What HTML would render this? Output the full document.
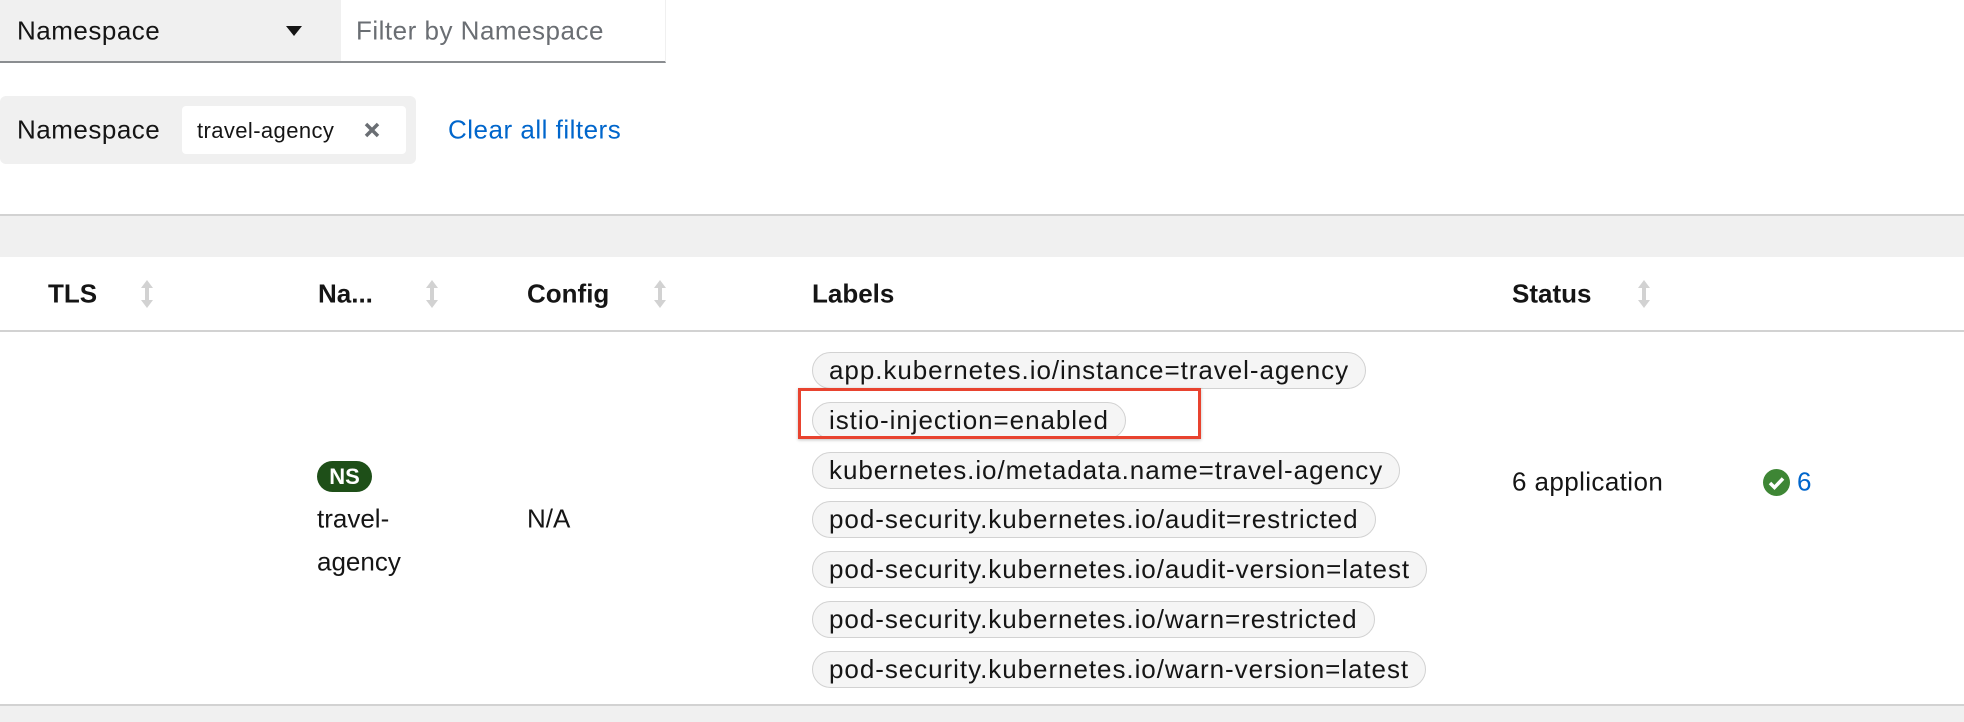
<!DOCTYPE html>
<html><head><meta charset="utf-8"><style>
*{margin:0;padding:0;box-sizing:border-box}
body{width:1964px;height:722px;overflow:hidden;background:#fff;font-family:"Liberation Sans",sans-serif;color:#151515;position:relative;font-size:26px}
.a{position:absolute;white-space:nowrap}
.v{transform:translateY(-50%)}
.pill{position:absolute;left:812px;height:37px;border:1px solid #d2d2d2;background:#f5f5f5;border-radius:19px;padding:0 16px 0 16px;font-size:26px;line-height:35px;letter-spacing:0.95px;white-space:nowrap}
.h{font-weight:bold;font-size:26px}
.sort{position:absolute;width:14px;height:30px}
</style></head><body>
<div class="a" style="left:0;top:0;width:341px;height:63px;background:#f0f0f0;border-bottom:2px solid #8a8d90"></div>
<div class="a" style="left:341px;top:0;width:325px;height:63px;border-bottom:2px solid #8a8d90;border-right:1px solid #f0f0f0"></div>
<div class="a v" style="left:17px;top:31px;letter-spacing:0.5px">Namespace</div>
<svg class="a" style="left:285px;top:25px" width="18" height="12"><path d="M1 1h16L9 11z" fill="#151515"/></svg>
<div class="a v" style="left:356px;top:31px;color:#6a6e73;letter-spacing:0.5px">Filter by Namespace</div>

<div class="a" style="left:0;top:96px;width:416px;height:68px;background:#f0f0f0;border-radius:6px"></div>
<div class="a v" style="left:17px;top:130px;letter-spacing:0.5px">Namespace</div>
<div class="a" style="left:182px;top:106px;width:224px;height:48px;background:#fff;border-radius:4px"></div>
<div class="a v" style="left:197px;top:131px;font-size:22px;letter-spacing:0.4px">travel-agency</div>
<svg class="a" style="left:363px;top:121px" width="18" height="18"><path d="M3 3L15 15M15 3L3 15" stroke="#6a6e73" stroke-width="3.5"/></svg>
<div class="a v" style="left:448px;top:130px;color:#0066cc;letter-spacing:0.5px">Clear all filters</div>

<div class="a" style="left:0;top:214px;width:1964px;height:43px;background:#f0f0f0;border-top:2px solid #d2d2d2"></div>
<div class="a" style="left:0;top:330px;width:1964px;height:2px;background:#d2d2d2"></div>

<div class="a v h" style="left:48px;top:294px">TLS</div>
<div class="a v h" style="left:318px;top:294px">Na...</div>
<div class="a v h" style="left:527px;top:294px">Config</div>
<div class="a v h" style="left:812px;top:294px">Labels</div>
<div class="a v h" style="left:1512px;top:294px">Status</div>
<svg class="sort" style="left:140px;top:279px" viewBox="0 0 14 30"><path d="M7 1L1 9h4v12H1l6 8 6-8H9V9h4z" fill="#d2d2d2"/></svg>
<svg class="sort" style="left:425px;top:279px" viewBox="0 0 14 30"><path d="M7 1L1 9h4v12H1l6 8 6-8H9V9h4z" fill="#d2d2d2"/></svg>
<svg class="sort" style="left:653px;top:279px" viewBox="0 0 14 30"><path d="M7 1L1 9h4v12H1l6 8 6-8H9V9h4z" fill="#d2d2d2"/></svg>
<svg class="sort" style="left:1637px;top:279px" viewBox="0 0 14 30"><path d="M7 1L1 9h4v12H1l6 8 6-8H9V9h4z" fill="#d2d2d2"/></svg>

<div class="pill" style="top:352px">app.kubernetes.io/instance=travel-agency</div>
<div class="pill" style="top:402px">istio-injection=enabled</div>
<div class="pill" style="top:452px">kubernetes.io/metadata.name=travel-agency</div>
<div class="pill" style="top:501px">pod-security.kubernetes.io/audit=restricted</div>
<div class="pill" style="top:551px">pod-security.kubernetes.io/audit-version=latest</div>
<div class="pill" style="top:601px">pod-security.kubernetes.io/warn=restricted</div>
<div class="pill" style="top:651px">pod-security.kubernetes.io/warn-version=latest</div>
<div class="a" style="left:798px;top:388px;width:403px;height:51px;border:3px solid #e8432f;box-shadow:0 1px 3px rgba(0,0,0,.25)"></div>

<div class="a" style="left:317px;top:461px;width:55px;height:31px;background:#1e4f18;border-radius:16px;color:#fff;font-weight:bold;font-size:22px;line-height:31px;text-align:center">NS</div>
<div class="a v" style="left:317px;top:519px">travel-</div>
<div class="a v" style="left:317px;top:562px">agency</div>
<div class="a v" style="left:527px;top:519px">N/A</div>
<div class="a v" style="left:1512px;top:482px;letter-spacing:0.4px">6 application</div>
<svg class="a" style="left:1763px;top:469px" width="27" height="27" viewBox="0 0 27 27"><circle cx="13.5" cy="13.5" r="13.5" fill="#3e8635"/><path d="M7 14l4.5 4.5L20 9.5" stroke="#fff" stroke-width="3.5" fill="none"/></svg>
<div class="a v" style="left:1797px;top:482px;color:#0066cc">6</div>

<div class="a" style="left:0;top:704px;width:1964px;height:18px;background:#f0f0f0;border-top:2px solid #d2d2d2"></div>
</body></html>
